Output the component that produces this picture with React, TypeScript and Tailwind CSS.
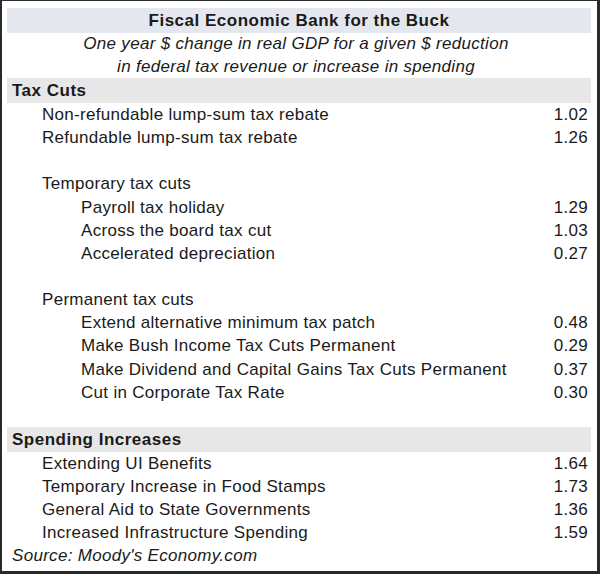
type Row = { label: string; value?: string; level: 0 | 1 | 2 | -1 };

const taxRows: Row[] = [
  { label: "Non-refundable lump-sum tax rebate", value: "1.02", level: 1 },
  { label: "Refundable lump-sum tax rebate", value: "1.26", level: 1 },
  { label: "", level: -1 },
  { label: "Temporary tax cuts", level: 1 },
  { label: "Payroll tax holiday", value: "1.29", level: 2 },
  { label: "Across the board tax cut", value: "1.03", level: 2 },
  { label: "Accelerated depreciation", value: "0.27", level: 2 },
  { label: "", level: -1 },
  { label: "Permanent tax cuts", level: 1 },
  { label: "Extend alternative minimum tax patch", value: "0.48", level: 2 },
  { label: "Make Bush Income Tax Cuts Permanent", value: "0.29", level: 2 },
  { label: "Make Dividend and Capital Gains Tax Cuts Permanent", value: "0.37", level: 2 },
  { label: "Cut in Corporate Tax Rate", value: "0.30", level: 2 },
];

const spendRows: Row[] = [
  { label: "Extending UI Benefits", value: "1.64", level: 1 },
  { label: "Temporary Increase in Food Stamps", value: "1.73", level: 1 },
  { label: "General Aid to State Governments", value: "1.36", level: 1 },
  { label: "Increased Infrastructure Spending", value: "1.59", level: 1 },
];

const LineRow = ({ row, tall }: { row: Row; tall?: boolean }) => {
  const h = tall ? "h-[23.15px] leading-[23.15px]" : "h-[23px] leading-[23px]";
  if (row.level === -1) return <div className={h} />;
  return (
    <div className={`flex items-center justify-between ${h}`}>
      <span className={row.level === 2 ? "pl-[74px]" : "pl-[35px]"}>{row.label}</span>
      {row.value && <span className="pr-[3px]">{row.value}</span>}
    </div>
  );
};

const SectionBand = ({ title }: { title: string }) => (
  <div className="h-[25px] bg-[#e7e7e7] pl-[5px] font-bold leading-[25px] tracking-[0.5px]">
    {title}
  </div>
);

const App = () => {
  return (
    <div
      className="h-[576px] w-[600px] bg-white text-[17px] tracking-[0.3px] text-[#1a1a1a]"
      style={{ fontFamily: '"Liberation Sans", Arial, sans-serif' }}
    >
      <div className="h-[574px] border-b-[3px] border-l-2 border-r-[3px] border-t border-[#2a2a2a] pl-[5px] pr-[6px] pt-[7px]">
        <div className="h-[25px] bg-[#e4e8ee] text-center font-bold leading-[25px] tracking-[0.5px]">
          Fiscal Economic Bank for the Buck
        </div>
        <div className="pr-[6px] text-center italic leading-[22.5px]">
          <div>One year $ change in real GDP for a given $ reduction</div>
          <div>in federal tax revenue or increase in spending</div>
        </div>
        <SectionBand title="Tax Cuts" />
        {taxRows.map((r, i) => (
          <LineRow key={i} row={r} tall />
        ))}
        <div className="h-[23px]" />
        <SectionBand title="Spending Increases" />
        {spendRows.map((r, i) => (
          <LineRow key={i} row={r} />
        ))}
        <div className="h-[23px] pl-[5px] italic leading-[23px]">Source: Moody's Economy.com</div>
      </div>
    </div>
  );
};

export default App;
